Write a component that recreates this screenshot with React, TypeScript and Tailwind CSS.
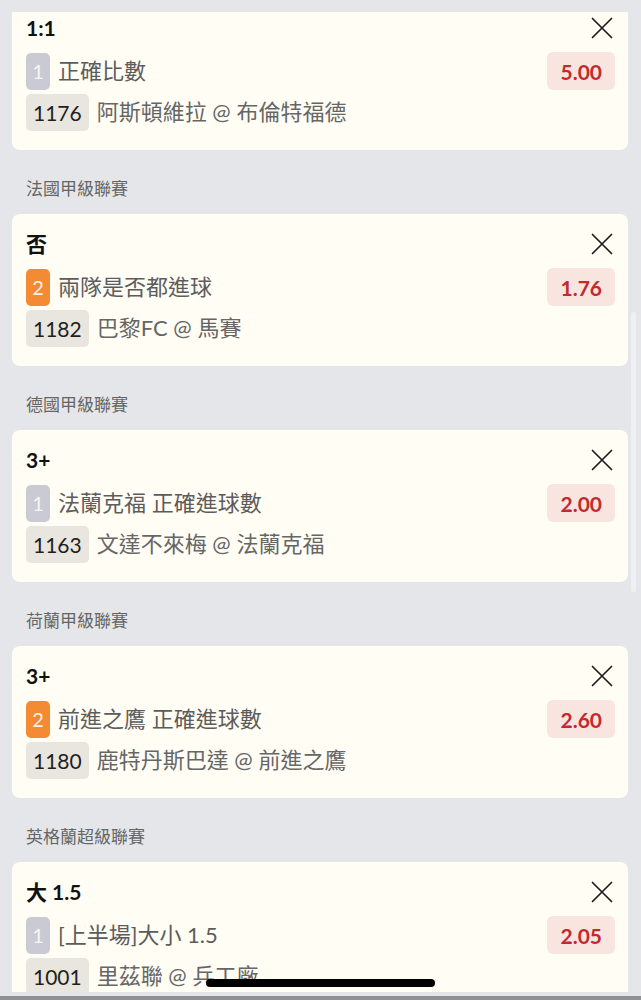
import React from "react";

type Bet = {
  league?: string;
  title: string;
  leg: string;
  legColor: "gray" | "orange";
  market: string;
  odds: string;
  code: string;
  match: string;
};

const bets: Bet[] = [
  { title: "1:1", leg: "1", legColor: "gray", market: "正確比數", odds: "5.00", code: "1176", match: "阿斯頓維拉 @ 布倫特福德" },
  { league: "法國甲級聯賽", title: "否", leg: "2", legColor: "orange", market: "兩隊是否都進球", odds: "1.76", code: "1182", match: "巴黎FC @ 馬賽" },
  { league: "德國甲級聯賽", title: "3+", leg: "1", legColor: "gray", market: "法蘭克福 正確進球數", odds: "2.00", code: "1163", match: "文達不來梅 @ 法蘭克福" },
  { league: "荷蘭甲級聯賽", title: "3+", leg: "2", legColor: "orange", market: "前進之鷹 正確進球數", odds: "2.60", code: "1180", match: "鹿特丹斯巴達 @ 前進之鷹" },
  { league: "英格蘭超級聯賽", title: "大 1.5", leg: "1", legColor: "gray", market: "[上半場]大小 1.5", odds: "2.05", code: "1001", match: "里茲聯 @ 兵工廠" },
];

const font = { fontFamily: 'Lato, "Noto Sans CJK TC", sans-serif' };

function CloseIcon() {
  return (
    <svg width="22" height="22" viewBox="0 0 22 22" className="mr-[2px]">
      <path d="M1.5 1.5 L20.5 20.5 M20.5 1.5 L1.5 20.5" stroke="#1d1d1f" strokeWidth="1.7" strokeLinecap="round" fill="none" />
    </svg>
  );
}

function Card({ bet, first }: { bet: Bet; first?: boolean }) {
  return (
    <div className={`bg-[#fffdf4] rounded-lg pl-[14px] pr-[13px] ${first ? "pt-[15px] pb-[19px]" : "pt-[16px] pb-[19px]"}`}>
      <div className="flex items-center justify-between h-[28px]">
        <span className="text-[21px] font-bold text-[#111] leading-[28px]">{bet.title}</span>
        <CloseIcon />
      </div>
      <div className="mt-[10px] flex items-center justify-between h-[38px]">
        <div className="flex items-center gap-[8px]">
          <span
            className={`w-[24px] h-[37px] rounded-[5px] flex items-center justify-center text-[20px] leading-none ${
              bet.legColor === "gray" ? "bg-[#c9cad4] text-[#f4f4f8]" : "bg-[#f48a33] text-[#fff3e6]"
            }`}
          >
            {bet.leg}
          </span>
          <span className="text-[22px] text-[#5c5c5c] leading-none">{bet.market}</span>
        </div>
        <span className="h-[38px] px-[13px] rounded-[6px] bg-[#f9e5df] text-[#c22a2c] text-[21px] font-bold flex items-center leading-none">
          {bet.odds}
        </span>
      </div>
      <div className="mt-[3px] flex items-center gap-[8px] h-[38px]">
        <span className="h-[37px] px-[7px] rounded-[5px] bg-[#e9e6df] text-[#1f1f1f] text-[21px] flex items-center leading-none">
          {bet.code}
        </span>
        <span className="text-[22px] text-[#666] leading-none">{bet.match}</span>
      </div>
    </div>
  );
}

export default function App() {
  return (
    <div className="relative h-[1000px] w-[641px] overflow-hidden bg-[#e5e6e9]" style={font}>
      <div className="pl-[12px] pr-[13px] -mt-[1px]">
        {bets.map((b, i) => (
          <div key={i}>
            {b.league && (
              <div className="mt-[27px] mb-[13px] h-[24px] pl-[14px] text-[17px] leading-[24px] text-[#666]">{b.league}</div>
            )}
            <Card bet={b} first={i === 0} />
          </div>
        ))}
      </div>
      {/* top sheet edge overlay */}
      <div className="absolute top-0 left-0 right-0 h-[12px] bg-[#e5e6e9]" />
      {/* scroll indicator */}
      <div className="absolute left-[631px] top-[312px] w-[5px] h-[280px] rounded-full bg-[#eef0f3]" />
      {/* bottom edge */}
      <div className="absolute bottom-0 left-0 right-0 h-[8px] flex flex-col">
        <div className="h-[4px] bg-[#e4e5e8]" />
        <div className="h-[4px] bg-[#8f9094]" />
      </div>
      {/* home indicator */}
      <div className="absolute left-[206px] top-[979px] w-[229px] h-[8px] rounded-full bg-black" />
    </div>
  );
}
